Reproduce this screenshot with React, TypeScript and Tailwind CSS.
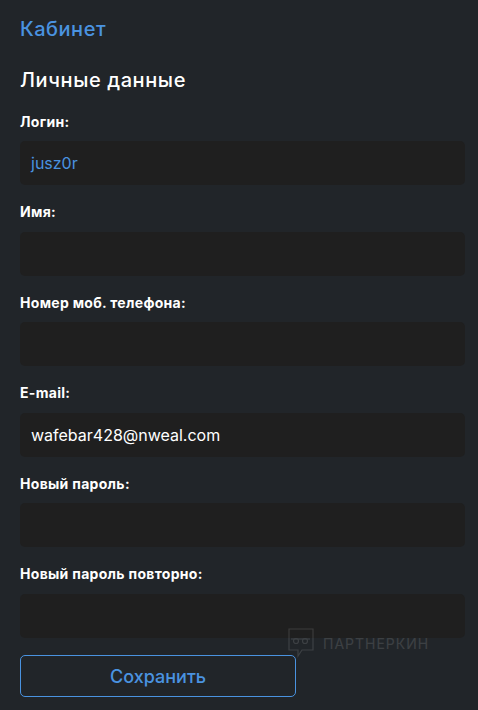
import React from "react";

const fields: { label: string; value?: string; blue?: boolean }[] = [
  { label: "Логин:", value: "jusz0r", blue: true },
  { label: "Имя:" },
  { label: "Номер моб. телефона:" },
  { label: "E-mail:", value: "wafebar428@nweal.com" },
  { label: "Новый пароль:" },
  { label: "Новый пароль повторно:" },
];

export default function App() {
  return (
    <div
      className="w-[478px] h-[710px] bg-[#212529] pl-5 pr-[13px] overflow-hidden relative"
      style={{ fontFamily: "Inter, 'Noto Sans', sans-serif" }}
    >
      <div className="pt-[17px] text-[20px] leading-[24px] tracking-[0.5px] text-[#4a93e0] font-medium">Кабинет</div>
      <div className="mt-[27px] text-[20px] leading-[24px] tracking-[0.6px] text-white font-medium">Личные данные</div>
      <div className="mt-[15px] flex flex-col">
        {fields.map((f, i) => (
          <div key={i} className="flex flex-col">
            <div className="h-[28px] flex items-center text-[14px] tracking-[0.3px] font-bold text-white">{f.label}</div>
            <div className="mt-[6px] h-[44px] rounded-[5px] bg-[#1f1f1f] flex items-center pl-[11px] pr-[11px] text-[16px]">
              <span className={f.blue ? "text-[#4a93e0]" : "text-white"}>{f.value}</span>
            </div>
            <div className="h-[12.5px]" />
          </div>
        ))}
      </div>
      <div className="absolute left-[288px] top-[628px] flex items-center gap-[9px] opacity-[0.12]">
        <svg width="26" height="30" viewBox="0 0 26 30" fill="none" stroke="#fff" strokeWidth="1.2">
          <path d="M1 1 H25 V22 H14 L10 28 V22 H1 Z" />
          <circle cx="8" cy="13" r="2.5" />
          <circle cx="17" cy="13" r="2.5" />
          <path d="M3 11 H22" />
        </svg>
        <span className="text-[14px] tracking-[1px] text-white">ПАРТНЕРКИН</span>
      </div>
      <button className="mt-[5px] w-[276px] h-[42px] rounded-[5px] border border-[#4a93e0] text-[#4a93e0] text-[18px] font-medium flex items-center justify-center">
        Сохранить
      </button>
    </div>
  );
}
